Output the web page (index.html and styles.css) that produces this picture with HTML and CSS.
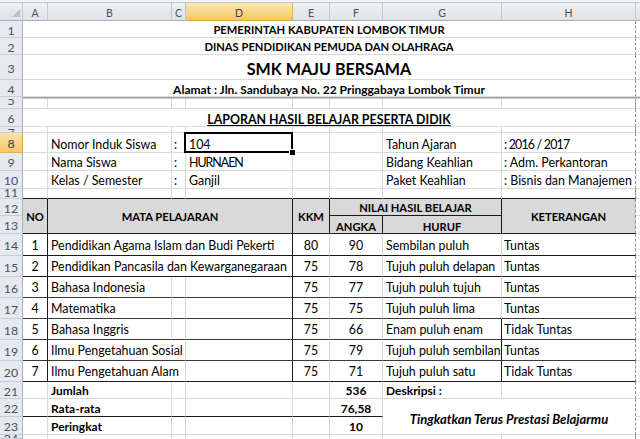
FILE: index.html
```html
<!DOCTYPE html>
<html>
<head>
<meta charset="utf-8">
<link rel="stylesheet" href="styles.css">
</head>
<body>
<div class="sheet">
  <div class="strip"></div>

  <div class="ch corner"><svg width="10" height="10" viewBox="0 0 10 10"><polygon points="1,9 9,9 9,1" fill="#b9c0c9"/></svg></div>
  <div class="ch">A</div><div class="ch">B</div><div class="ch">C</div><div class="ch chs">D</div><div class="ch">E</div><div class="ch">F</div><div class="ch">G</div><div class="ch">H</div><div class="ch chx"></div>

  <div class="rh">1</div><div class="c8 e title">PEMERINTAH KABUPATEN LOMBOK TIMUR</div><div class="x"></div>
  <div class="rh">2</div><div class="c8 e title">DINAS PENDIDIKAN PEMUDA DAN OLAHRAGA</div><div class="x"></div>
  <div class="rh">3</div><div class="c8 e title big">SMK MAJU BERSAMA</div><div class="x"></div>
  <div class="rh">4</div><div class="c8 e title addr">Alamat : Jln. Sandubaya No. 22 Pringgabaya Lombok Timur</div><div class="x"></div>

  <div class="rh blank"></div><div class="c9 freeze"></div>

  <div class="rh cut-mid">5</div><div></div><div></div><div></div><div></div><div></div><div></div><div></div><div class="e"></div><div class="x"></div>
  <div class="rh">6</div><div class="c8 e title under">LAPORAN HASIL BELAJAR PESERTA DIDIK</div><div class="x"></div>
  <div class="rh cut-a">7</div><div></div><div></div><div></div><div></div><div></div><div></div><div></div><div class="e"></div><div class="x"></div>

  <div class="rh rhs">8</div><div></div><div class="pl r8">Nomor Induk Siswa</div><div class="pc r8">:</div><div class="pl r8 sel">104<span class="handle"></span></div><div></div><div></div><div class="pl r8">Tahun Ajaran</div><div class="e ph r8 num">: 2016 / 2017</div><div class="x"></div>
  <div class="rh">9</div><div></div><div class="pl">Nama Siswa</div><div class="pc">:</div><div class="pl caps">HURNAEN</div><div></div><div></div><div class="pl">Bidang Keahlian</div><div class="e ph">: Adm. Perkantoran</div><div class="x"></div>
  <div class="rh">10</div><div></div><div class="pl">Kelas / Semester</div><div class="pc">:</div><div class="pl">Ganjil</div><div></div><div></div><div class="pl">Paket Keahlian</div><div class="e ph">: Bisnis dan Manajemen</div><div class="x"></div>
  <div class="rh cut-b">11</div><div class="bb"></div><div class="bb"></div><div class="bb"></div><div class="bb"></div><div class="bb"></div><div class="bb"></div><div class="bb"></div><div class="bb e"></div><div class="x"></div>

  <div class="rh">12</div><div class="th r2 br bb">NO</div><div class="th c3 r2 br bb">MATA PELAJARAN</div><div class="th r2 br bb">KKM</div><div class="th c2 br bb">NILAI HASIL BELAJAR</div><div class="th r2 e bb">KETERANGAN</div><div class="x"></div>
  <div class="rh">13</div><div class="th dn br bb">ANGKA</div><div class="th dn br bb">HURUF</div><div class="x"></div>

  <div class="rh">14</div><div class="ctr br bb">1</div><div class="c3 pl br bb">Pendidikan Agama Islam dan Budi Pekerti</div><div class="ctr bb">80</div><div class="ctr bb">90</div><div class="pl bb">Sembilan puluh</div><div class="ph e bb">Tuntas</div><div class="x"></div>
  <div class="rh">15</div><div class="ctr br bb">2</div><div class="c3 pl br bb">Pendidikan Pancasila dan Kewarganegaraan</div><div class="ctr bb">75</div><div class="ctr bb">78</div><div class="pl bb">Tujuh puluh delapan</div><div class="ph e bb">Tuntas</div><div class="x"></div>
  <div class="rh">16</div><div class="ctr br bm">3</div><div class="pl bm">Bahasa Indonesia</div><div class="bm"></div><div class="br bm"></div><div class="ctr bm">75</div><div class="ctr bm">77</div><div class="pl bm">Tujuh puluh tujuh</div><div class="ph e bm">Tuntas</div><div class="x"></div>
  <div class="rh">17</div><div class="ctr br bm">4</div><div class="pl bm">Matematika</div><div class="bm"></div><div class="br bm"></div><div class="ctr bm">75</div><div class="ctr bm">75</div><div class="pl bm">Tujuh puluh lima</div><div class="ph e bm">Tuntas</div><div class="x"></div>
  <div class="rh">18</div><div class="ctr br bm">5</div><div class="pl bm">Bahasa Inggris</div><div class="bm"></div><div class="br bm"></div><div class="ctr bm">75</div><div class="ctr bm">66</div><div class="pl br bm">Enam puluh enam</div><div class="ph e bm">Tidak Tuntas</div><div class="x"></div>
  <div class="rh">19</div><div class="ctr br bm">6</div><div class="c2 pl bm">Ilmu Pengetahuan Sosial</div><div class="br bm"></div><div class="ctr bm">75</div><div class="ctr bm">79</div><div class="pl br bm">Tujuh puluh sembilan</div><div class="ph e bm">Tuntas</div><div class="x"></div>
  <div class="rh">20</div><div class="ctr br bb">7</div><div class="c2 pl bb">Ilmu Pengetahuan Alam</div><div class="br bb"></div><div class="ctr bb">75</div><div class="ctr bb">71</div><div class="pl br bb">Tujuh puluh satu</div><div class="ph e bb">Tidak Tuntas</div><div class="x"></div>

  <div class="rh">21</div><div></div><div class="pl b">Jumlah</div><div></div><div></div><div></div><div class="ctr b">536</div><div class="pl b">Deskripsi :</div><div class="e"></div><div class="x"></div>
  <div class="rh">22</div><div class="bb"></div><div class="pl b bb">Rata-rata</div><div class="bb"></div><div class="bb"></div><div class="bb"></div><div class="ctr b bb">76,58</div><div class="c2 r2 e motto">Tingkatkan Terus Prestasi Belajarmu</div><div class="x"></div>
  <div class="rh">23</div><div></div><div class="pl b">Peringkat</div><div></div><div></div><div></div><div class="ctr b">10</div><div class="x"></div>
  <div class="rh cut-b">24</div><div class="nb"></div><div class="nb"></div><div class="nb"></div><div class="nb"></div><div class="nb"></div><div class="nb"></div><div class="nb"></div><div class="nb e"></div><div class="nb x"></div>
</div>
</body>
</html>
```

FILE: styles.css
```css
:root {
  --gl: #d9d9d9;
  --dk: #1a1a1a;
  --md: #3a3a3a;
  --fs: 12.4px;
}
html, body {
  margin: 0;
  padding: 0;
  background: #fff;
}
body {
  font-family: Lato, "Liberation Sans", sans-serif;
  font-size: var(--fs);
  color: #000;
}
.sheet {
  display: grid;
  grid-template-columns: 23px 25px 124px 14px 107px 37px 53px 119px 134px 4px;
  grid-template-rows: 3px 18px 17px 17px 25px 17px 2px 10px 18px 6px 20px 18px 18px 10px 17px 18px 22px 21px 21px 21px 21px 21px 21px 17px 18px 18px 4px;
  width: 640px;
  height: 439px;
  overflow: hidden;
}
.sheet > div {
  box-sizing: border-box;
  border-right: 1px solid var(--gl);
  border-bottom: 1px solid var(--gl);
  overflow: hidden;
  white-space: nowrap;
  display: flex;
  align-items: center;
  min-width: 0;
  min-height: 0;
  padding-top: 1px;
}
.c2 { grid-column: span 2; }
.c3 { grid-column: span 3; }
.c8 { grid-column: span 8; }
.c9 { grid-column: span 9; }
.r2 { grid-row: span 2; }

.sheet > .strip {
  grid-column: span 10;
  background: #f3f4f5;
  border-right: none;
  border-bottom: 1px solid #c3c8cf;
  padding: 0;
}
.sheet > .ch {
  background: linear-gradient(#eef0f3, #dfe2e6);
  border-right: 1px solid #c3c8cf;
  border-bottom: 1px solid #a7b0bb;
  justify-content: center;
  color: #4a5260;
  font-size: 10.5px;
  padding: 2px 0 0;
}
.sheet > .corner {
  justify-content: flex-end;
  align-items: flex-end;
  padding: 0 1px 2px 0;
}
.sheet > .chs {
  background: linear-gradient(#fbe7b0, #f4c868);
  border-bottom: 1px solid #e8a23c;
  border-right: 1px solid #e2b35a;
  color: #3d3d3d;
}
.sheet > .chx { border-right: none; }

.sheet > .rh {
  background: #e6e9ed;
  border-right: 1px solid #a7b0bb;
  border-bottom: 1px solid #c7ccd3;
  justify-content: center;
  color: #4a5260;
  font-size: 12.3px;
  padding: 2px 0 0;
}
.sheet > .rhs {
  background: linear-gradient(#fbe3a6, #f4c868);
  border-bottom: 1px solid #e2b35a;
  border-right: 1px solid #e8a23c;
  color: #3d3d3d;
}
.sheet > .cut-mid {
  align-items: flex-end;
  line-height: 13px;
  padding: 0 0 1px;
}
.sheet > .cut-a {
  align-items: flex-start;
  line-height: 11px;
  padding: 0;
}
.sheet > .cut-b {
  align-items: flex-start;
  line-height: 7px;
  padding: 0;
}
.sheet > .blank { border-bottom: none; }

.sheet > .freeze {
  background: #a3a3a3;
  border: none;
  border-bottom: 1px solid #c8c8c8;
  padding: 0;
}

.sheet > .x { border-right: none; }
.sheet > .e { border-right: 1px dashed #8c8c8c; }
.sheet > .nb { border-bottom: none; }

.title {
  justify-content: center;
  font-weight: 700;
  font-size: 11.2px;
}
.sheet > .big { font-size: 16.1px; padding-top: 3px; }
.sheet > .addr { font-size: 12px; padding-top: 3px; }
.sheet > .under { font-size: 12.4px; text-decoration: underline; padding-top: 3px; }

.pl { padding-left: 3px; }
.ph { padding-left: 2px; }
.pc { padding-left: 2px; }
.ctr { justify-content: center; }
.b { font-weight: 700; font-size: 12px; }
.sheet > .r8 { padding-top: 4px; }
.num { letter-spacing: -0.8px; }
.caps { letter-spacing: -1px; }

.sheet > .th {
  background: #d9d9d9;
  font-weight: 700;
  font-size: 11.2px;
  justify-content: center;
}
.sheet > .dn { padding-top: 3px; }
.sheet > .bb { border-bottom-color: var(--dk); }
.sheet > .bm { border-bottom-color: var(--md); }
.sheet > .br { border-right-color: var(--dk); }

.sheet > .motto {
  justify-content: center;
  font-weight: 700;
  font-style: italic;
  font-size: 13px;
  padding-top: 4px;
}

.sheet > .sel {
  position: relative;
  overflow: visible;
  z-index: 2;
}
.sel::after {
  content: "";
  position: absolute;
  left: -2px;
  top: -1px;
  right: -1px;
  bottom: -1px;
  border: 2px solid #000;
}
.handle {
  position: absolute;
  right: -4px;
  bottom: -4px;
  width: 5px;
  height: 5px;
  background: #000;
  border: 1px solid #fff;
  z-index: 3;
}
```
